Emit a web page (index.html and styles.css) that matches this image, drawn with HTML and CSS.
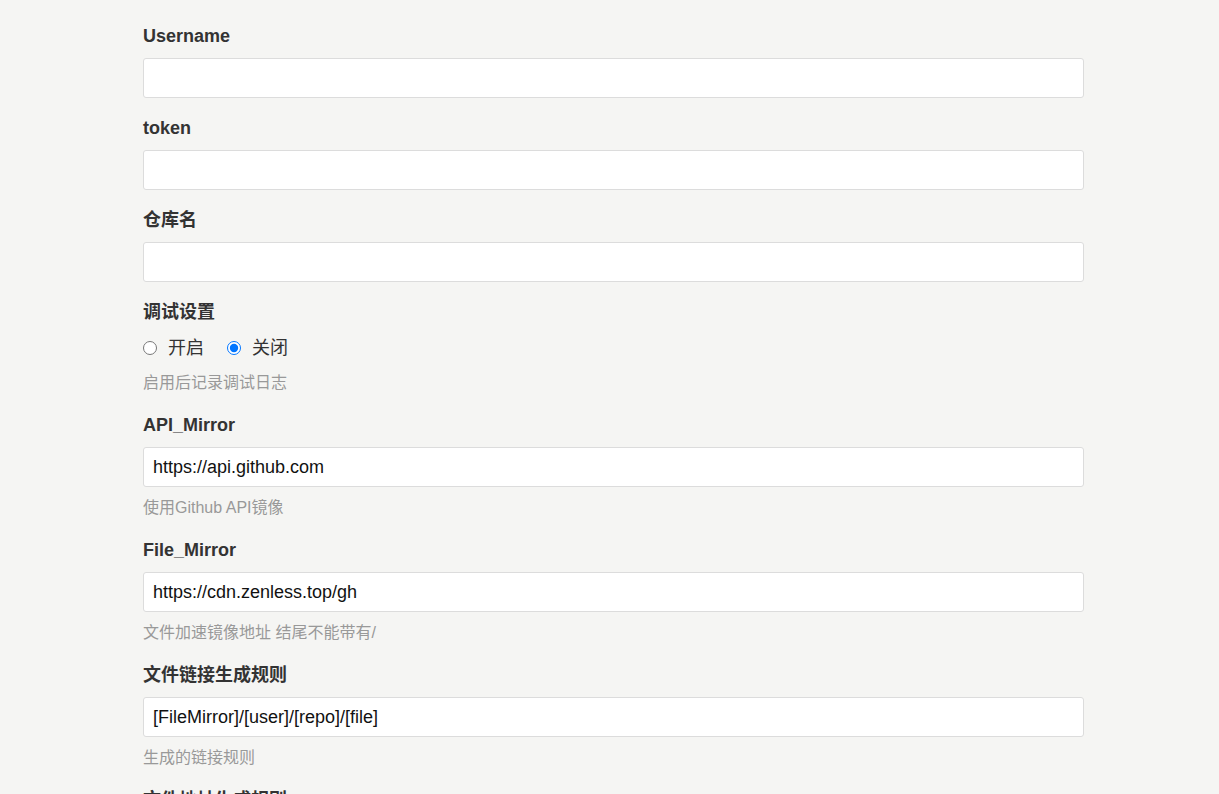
FILE: index.html
```html
<!DOCTYPE html>
<html lang="zh-CN">
<head>
    <meta charset="UTF-8">
    <meta name="viewport" content="width=device-width, initial-scale=1.0">
    <title>设置</title>
    <link rel="stylesheet" href="styles.css">
</head>
<body>
    <div class="container">
        <form class="settings">
            <div class="field">
                <label class="field-label" for="username">Username</label>
                <input class="field-input" type="text" id="username">
            </div>

            <div class="field">
                <label class="field-label" for="token">token</label>
                <input class="field-input" type="text" id="token">
            </div>

            <div class="field">
                <label class="field-label" for="repo">仓库名</label>
                <input class="field-input" type="text" id="repo">
            </div>

            <div class="field field-help">
                <span class="field-label">调试设置</span>
                <div class="radio-row">
                    <label class="radio"><input type="radio" name="debug" value="on"> 开启</label>
                    <label class="radio"><input type="radio" name="debug" value="off" checked> 关闭</label>
                </div>
                <p class="help">启用后记录调试日志</p>
            </div>

            <div class="field field-help">
                <label class="field-label" for="api-mirror">API_Mirror</label>
                <input class="field-input" type="text" id="api-mirror" value="https://api.github.com">
                <p class="help">使用Github API镜像</p>
            </div>

            <div class="field field-help">
                <label class="field-label" for="file-mirror">File_Mirror</label>
                <input class="field-input" type="text" id="file-mirror" value="https://cdn.zenless.top/gh">
                <p class="help">文件加速镜像地址 结尾不能带有/</p>
            </div>

            <div class="field field-help">
                <label class="field-label" for="link-rule">文件链接生成规则</label>
                <input class="field-input" type="text" id="link-rule" value="[FileMirror]/[user]/[repo]/[file]">
                <p class="help">生成的链接规则</p>
            </div>

            <div class="field field-help">
                <label class="field-label" for="addr-rule">文件地址生成规则</label>
                <input class="field-input" type="text" id="addr-rule">
                <p class="help">生成的文件地址规则</p>
            </div>
        </form>
    </div>
</body>
</html>
```

FILE: styles.css
```css
body {
    margin: 0;
    padding: 0;
    background-color: #f5f5f3;
    color: #333;
    font-family: "Liberation Sans", Arial, "Noto Sans CJK SC", sans-serif;
}

.container {
    width: 949px;
    margin: 0 auto;
    padding: 24px 0 40px 8px;
    box-sizing: border-box;
}

.settings {
    display: flex;
    flex-direction: column;
}

.field {
    display: flex;
    flex-direction: column;
    margin-bottom: 18px;
}

.field.field-help {
    margin-bottom: 20px;
}

.field-label {
    font-size: 18px;
    font-weight: bold;
    line-height: 24px;
    color: #333;
    margin-bottom: 10px;
}

.field-input {
    height: 40px;
    box-sizing: border-box;
    border: 1px solid #dcdcdc;
    border-radius: 3px;
    background-color: #fff;
    padding: 0 9px;
    font-family: inherit;
    font-size: 18px;
    color: #111;
    outline: none;
}

.field-input:focus {
    border-color: #9bb8e0;
}

.radio-row {
    display: flex;
    gap: 23px;
    height: 24px;
    align-items: center;
    margin-top: 2px;
}

.radio {
    display: flex;
    align-items: center;
    gap: 11px;
    font-size: 18px;
    line-height: 24px;
    color: #333;
    cursor: pointer;
}

.radio input {
    margin: 0;
    width: 14px;
    height: 14px;
}

.help {
    margin: 11px 0 0;
    font-size: 16px;
    line-height: 20px;
    color: #999;
}

.radio-row + .help {
    margin-top: 13px;
}
```
